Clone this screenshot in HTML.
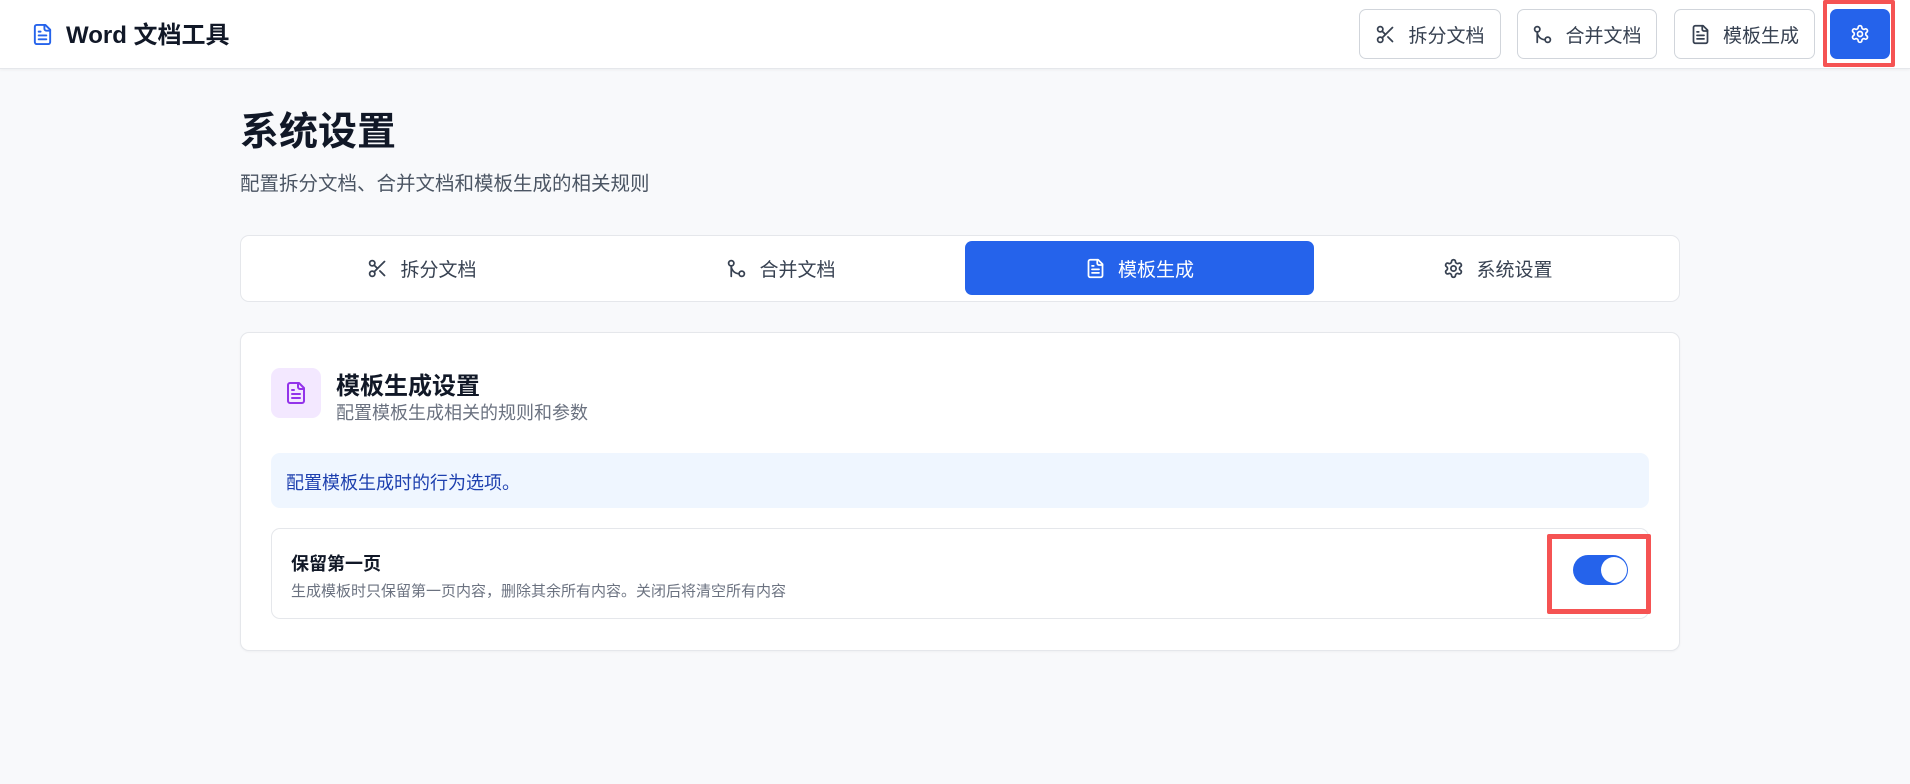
<!DOCTYPE html>
<html><head><meta charset="utf-8"><style>
*{box-sizing:border-box;margin:0;padding:0}
body{width:1910px;height:784px;background:#f8f9fb;font-family:"Liberation Sans","Noto Sans CJK SC",sans-serif;position:relative;overflow:hidden;color:#111827}
.a{position:absolute}
.hdr{left:0;top:0;width:1910px;height:69px;background:#fff;border-bottom:1px solid #e5e7eb;box-shadow:0 1px 3px rgba(0,0,0,.05)}
.btn{top:9px;height:50px;border:1.5px solid #d1d5db;border-radius:7px;background:#fff;display:flex;align-items:center;justify-content:center;gap:12px;font-size:19px;color:#374151}
svg{fill:none;stroke:currentColor;stroke-width:2;stroke-linecap:round;stroke-linejoin:round}
.tab{top:241px;height:54px;display:flex;align-items:center;justify-content:center;gap:12px;font-size:19px;color:#374151;border-radius:7px}
</style></head><body>
<div class="a hdr"></div>
<svg class="a" style="left:31px;top:22px;color:#2563eb" width="23" height="25" viewBox="0 0 24 24"><path d="M15 2H6a2 2 0 0 0-2 2v16a2 2 0 0 0 2 2h12a2 2 0 0 0 2-2V7Z"/><path d="M14 2v4a2 2 0 0 0 2 2h4"/><path d="M10 9H8M16 13H8M16 17H8"/></svg>
<div class="a" style="left:66px;top:15px;font-size:24px;font-weight:bold;color:#111827">Word 文档工具</div>

<div class="a btn" style="left:1359px;width:142px"><svg width="21" height="21" viewBox="0 0 24 24"><circle cx="6" cy="6" r="3"/><path d="M8.12 8.12 12 12"/><path d="M20 4 8.12 15.88"/><circle cx="6" cy="18" r="3"/><path d="M14.8 14.8 20 20"/></svg>拆分文档</div>
<div class="a btn" style="left:1517px;width:140px"><svg width="21" height="21" viewBox="0 0 24 24"><circle cx="18" cy="18" r="3"/><circle cx="6" cy="6" r="3"/><path d="M6 21V9a9 9 0 0 0 9 9"/></svg>合并文档</div>
<div class="a btn" style="left:1674px;width:141px"><svg width="21" height="21" viewBox="0 0 24 24"><path d="M15 2H6a2 2 0 0 0-2 2v16a2 2 0 0 0 2 2h12a2 2 0 0 0 2-2V7Z"/><path d="M14 2v4a2 2 0 0 0 2 2h4"/><path d="M10 9H8M16 13H8M16 17H8"/></svg>模板生成</div>
<div class="a" style="left:1823px;top:0;width:72px;height:67px;border:4px solid #f55353;border-radius:2px"></div>
<div class="a" style="left:1830px;top:9px;width:60px;height:50px;background:#2563eb;border-radius:7px;display:flex;align-items:center;justify-content:center;color:#fff"><svg width="20" height="20" viewBox="0 0 24 24"><path d="M12.22 2h-.44a2 2 0 0 0-2 2v.18a2 2 0 0 1-1 1.73l-.43.25a2 2 0 0 1-2 0l-.15-.08a2 2 0 0 0-2.73.73l-.22.38a2 2 0 0 0 .73 2.73l.15.1a2 2 0 0 1 1 1.72v.51a2 2 0 0 1-1 1.74l-.15.09a2 2 0 0 0-.73 2.73l.22.38a2 2 0 0 0 2.73.73l.15-.08a2 2 0 0 1 2 0l.43.25a2 2 0 0 1 1 1.73V20a2 2 0 0 0 2 2h.44a2 2 0 0 0 2-2v-.18a2 2 0 0 1 1-1.73l.43-.25a2 2 0 0 1 2 0l.15.08a2 2 0 0 0 2.73-.73l.22-.39a2 2 0 0 0-.73-2.73l-.15-.08a2 2 0 0 1-1-1.74v-.5a2 2 0 0 1 1-1.74l.15-.09a2 2 0 0 0 .73-2.73l-.22-.38a2 2 0 0 0-2.73-.73l-.15.08a2 2 0 0 1-2 0l-.43-.25a2 2 0 0 1-1-1.73V4a2 2 0 0 0-2-2z"/><circle cx="12" cy="12" r="3"/></svg></div>

<div class="a" style="left:240px;top:108px;font-size:39px;font-weight:bold;line-height:50px;color:#111827">系统设置</div>
<div class="a" style="left:240px;top:167px;font-size:19.5px;color:#4b5563">配置拆分文档、合并文档和模板生成的相关规则</div>

<div class="a" style="left:240px;top:235px;width:1440px;height:67px;background:#fff;border:1.5px solid #e5e7eb;border-radius:9px"></div>
<div class="a tab" style="left:247px;width:350px"><svg width="21" height="21" viewBox="0 0 24 24"><circle cx="6" cy="6" r="3"/><path d="M8.12 8.12 12 12"/><path d="M20 4 8.12 15.88"/><circle cx="6" cy="18" r="3"/><path d="M14.8 14.8 20 20"/></svg>拆分文档</div>
<div class="a tab" style="left:606px;width:350px"><svg width="21" height="21" viewBox="0 0 24 24"><circle cx="18" cy="18" r="3"/><circle cx="6" cy="6" r="3"/><path d="M6 21V9a9 9 0 0 0 9 9"/></svg>合并文档</div>
<div class="a tab" style="left:965px;width:349px;background:#2563eb;color:#fff"><svg width="21" height="21" viewBox="0 0 24 24"><path d="M15 2H6a2 2 0 0 0-2 2v16a2 2 0 0 0 2 2h12a2 2 0 0 0 2-2V7Z"/><path d="M14 2v4a2 2 0 0 0 2 2h4"/><path d="M10 9H8M16 13H8M16 17H8"/></svg>模板生成</div>
<div class="a tab" style="left:1323px;width:350px"><svg width="21" height="21" viewBox="0 0 24 24"><path d="M12.22 2h-.44a2 2 0 0 0-2 2v.18a2 2 0 0 1-1 1.73l-.43.25a2 2 0 0 1-2 0l-.15-.08a2 2 0 0 0-2.73.73l-.22.38a2 2 0 0 0 .73 2.73l.15.1a2 2 0 0 1 1 1.72v.51a2 2 0 0 1-1 1.74l-.15.09a2 2 0 0 0-.73 2.73l.22.38a2 2 0 0 0 2.73.73l.15-.08a2 2 0 0 1 2 0l.43.25a2 2 0 0 1 1 1.73V20a2 2 0 0 0 2 2h.44a2 2 0 0 0 2-2v-.18a2 2 0 0 1 1-1.73l.43-.25a2 2 0 0 1 2 0l.15.08a2 2 0 0 0 2.73-.73l.22-.39a2 2 0 0 0-.73-2.73l-.15-.08a2 2 0 0 1-1-1.74v-.5a2 2 0 0 1 1-1.74l.15-.09a2 2 0 0 0 .73-2.73l-.22-.38a2 2 0 0 0-2.73-.73l-.15.08a2 2 0 0 1-2 0l-.43-.25a2 2 0 0 1-1-1.73V4a2 2 0 0 0-2-2z"/><circle cx="12" cy="12" r="3"/></svg>系统设置</div>

<div class="a" style="left:240px;top:332px;width:1440px;height:319px;background:#fff;border:1.5px solid #e5e7eb;border-radius:9px;box-shadow:0 1px 2px rgba(0,0,0,.04)"></div>
<div class="a" style="left:271px;top:368px;width:50px;height:50px;background:#f3e8ff;border-radius:9px;display:flex;align-items:center;justify-content:center;color:#9333ea"><svg width="24" height="24" viewBox="0 0 24 24"><path d="M15 2H6a2 2 0 0 0-2 2v16a2 2 0 0 0 2 2h12a2 2 0 0 0 2-2V7Z"/><path d="M14 2v4a2 2 0 0 0 2 2h4"/><path d="M10 9H8M16 13H8M16 17H8"/></svg></div>
<div class="a" style="left:336px;top:366px;font-size:24px;font-weight:bold;color:#111827">模板生成设置</div>
<div class="a" style="left:336px;top:399px;font-size:18px;color:#6b7280">配置模板生成相关的规则和参数</div>

<div class="a" style="left:271px;top:453px;width:1378px;height:55px;background:#eff6ff;border-radius:9px"></div>
<div class="a" style="left:286px;top:469px;font-size:18px;color:#1e40af">配置模板生成时的行为选项。</div>

<div class="a" style="left:271px;top:528px;width:1378px;height:91px;background:#fff;border:1.5px solid #e5e7eb;border-radius:9px"></div>
<div class="a" style="left:291px;top:550px;font-size:18px;font-weight:bold;color:#111827">保留第一页</div>
<div class="a" style="left:291px;top:580px;font-size:15px;color:#6b7280">生成模板时只保留第一页内容，删除其余所有内容。关闭后将清空所有内容</div>
<div class="a" style="left:1547px;top:534px;width:104px;height:80px;border:5px solid #f55353;border-radius:2px"></div>
<div class="a" style="left:1573px;top:555px;width:55px;height:30px;background:#2563eb;border-radius:15px"></div>
<div class="a" style="left:1601px;top:557px;width:26px;height:26px;background:#fff;border-radius:50%"></div>
</body></html>
